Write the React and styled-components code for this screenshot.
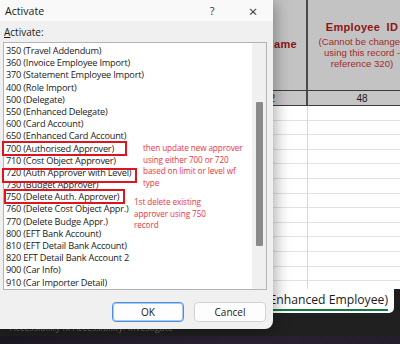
import React from 'react';
import styled, {createGlobalStyle} from 'styled-components';

const GlobalStyle = createGlobalStyle`
  html, body {
    margin: 0;
    padding: 0;
    background: #1f1f1f;
  }
  body {
    font-family: 'Open Sans', 'Noto Sans', sans-serif;
  }
`;

const Screen = styled.div`
  position: relative;
  width: 400px;
  height: 344px;
  overflow: hidden;
  display: flex;
  flex-direction: column;
  background: #1f1f1f;
`;

/* ---------- spreadsheet behind the dialog ---------- */

const Sheet = styled.div`
  flex-shrink: 0;
  width: 416px;
  height: 289px;
  overflow: hidden;
  display: grid;
  grid-template-columns: 308px 108px;
  grid-template-rows: 91px 15px;
  grid-auto-rows: 14.6px;
  background: #ffffff;
  font-family: 'Liberation Sans', Arial, sans-serif;
`;

const HeadCell = styled.div`
  display: flex;
  flex-direction: column;
  justify-content: center;
  align-items: ${p => (p.$end ? 'flex-end' : 'center')};
  padding-right: ${p => (p.$end ? '9px' : '0')};
  background: #c3c3c3;
  border-bottom: 1px solid #3c3c3c;
  border-right: ${p => (p.$end ? '2px solid #4a4a4a' : 'none')};
  color: #8e1414;
`;

const HeadTitle = styled.div`
  font-weight: bold;
  font-size: 11px;
  letter-spacing: 0.3px;
  word-spacing: 3px;
  margin-bottom: 3px;
`;

const HeadNote = styled.div`
  font-size: 9.6px;
  line-height: 11px;
  color: #a22a2a;
  white-space: nowrap;
`;

const ValueCell = styled.div`
  display: flex;
  align-items: center;
  justify-content: ${p => (p.$end ? 'flex-end' : 'center')};
  padding-right: ${p => (p.$end ? '31px' : '0')};
  background: #c6c6c6;
  border-bottom: 1px solid #3c3c3c;
  border-right: ${p => (p.$end ? '2px solid #4a4a4a' : 'none')};
  font-size: 10px;
  color: #1a1a1a;
`;

const EmptyCell = styled.div`
  border-bottom: 1px solid #e2e2e2;
  border-right: ${p => (p.$end ? '1px solid #d8d8d8' : 'none')};
`;

const TabBar = styled.div`
  flex-shrink: 0;
  height: 24px;
  display: flex;
  background: #1f1f1f;
`;

const ActiveTab = styled.div`
  width: 394px;
  display: flex;
  justify-content: flex-end;
  padding: 3px 6px 0 0;
  box-sizing: border-box;
  background: #ffffff;
  border-radius: 0 0 5px 0;
`;

const TabLabel = styled.span`
  font-family: 'Open Sans', sans-serif;
  font-size: 12.2px;
  line-height: 16px;
  height: 17px;
  color: #1b1b1b;
  white-space: nowrap;
  border-bottom: 2px solid #107c41;
`;

const StatusStrip = styled.div`
  flex-shrink: 0;
  height: 23px;
  display: flex;
  align-items: flex-end;
  padding: 0 0 2px 10px;
  box-sizing: border-box;
  background: #202020;
  color: #6a6a6a;
  font-size: 9px;
  filter: blur(0.6px);
`;

const Taskbar = styled.div`
  flex: 1;
  background: linear-gradient(90deg, #1c1822, #2b2233 60%, #241d2b);
`;

/* ---------- dialog ---------- */

const Dialog = styled.div`
  position: absolute;
  top: 0;
  left: 0;
  width: 273px;
  height: 329px;
  display: flex;
  flex-direction: column;
  background: #f0f0f0;
  border-radius: 0 0 8px 0;
  box-shadow: 2px 2px 16px rgba(0, 0, 0, 0.35);
  color: #1a1a1a;
`;

const TitleBar = styled.div`
  height: 21px;
  display: flex;
  align-items: center;
  padding-left: 5px;
  background: #f9f9f9;
`;

const Title = styled.span`
  flex: 1;
  font-size: 10.6px;
`;

const TitleButton = styled.span`
  width: ${p => p.$w}px;
  text-align: center;
  font-size: ${p => p.$size}px;
  color: #333;
`;

const Body = styled.div`
  display: flex;
  flex-direction: column;
  padding: 0 6px 0 3px;
`;

const FieldLabel = styled.div`
  height: 21px;
  display: flex;
  align-items: center;
  padding-left: 1px;
  font-size: 10px;
  u {
    text-decoration-thickness: 1px;
    text-underline-offset: 1px;
  }
`;

const ListBox = styled.div`
  position: relative;
  height: 248px;
  display: flex;
  background: #ffffff;
  border: 1px solid #b3b3b3;
  box-sizing: border-box;
`;

const Items = styled.ul`
  flex: 1;
  list-style: none;
  margin: 0;
  padding: 2px 0 0 2px;
`;

const Item = styled.li`
  height: 12.2px;
  line-height: 12.2px;
  font-size: 9.2px;
  letter-spacing: -0.2px;
  white-space: nowrap;
  color: #1a1a1a;
`;

const ScrollTrack = styled.div`
  width: 14px;
  display: flex;
  justify-content: center;
  padding-top: 59px;
  background: #f0f0f0;
`;

const ScrollThumb = styled.div`
  width: 7px;
  height: 144px;
  border-radius: 1px;
  background: #8a8a8a;
`;

const Mark = styled.div`
  position: absolute;
  left: ${p => p.$x}px;
  top: ${p => p.$y}px;
  width: ${p => p.$w}px;
  height: 15px;
  border: 2px solid #e0141e;
  box-sizing: border-box;
`;

const Note = styled.div`
  position: absolute;
  left: ${p => p.$x}px;
  top: ${p => p.$y}px;
  font-size: 8.2px;
  letter-spacing: -0.1px;
  line-height: 11.6px;
  color: #ee3440;
  white-space: nowrap;
`;

const ButtonRow = styled.div`
  display: flex;
  justify-content: flex-end;
  gap: 10px;
  margin-top: 12px;
  padding-right: 1px;
`;

const Button = styled.button`
  width: 72px;
  height: 20px;
  padding: 0;
  font-family: 'Open Sans', sans-serif;
  font-size: 10px;
  color: #1a1a1a;
  background: #fdfdfd;
  border: 1px solid ${p => (p.$primary ? '#4c8fdc' : '#d3d3d3')};
  box-shadow: ${p => (p.$primary ? 'inset 0 0 0 1px #a9c9ef' : 'none')};
  border-radius: 4px;
`;

const items = [
  '350 (Travel Addendum)',
  '360 (Invoice Employee Import)',
  '370 (Statement Employee Import)',
  '400 (Role Import)',
  '500 (Delegate)',
  '550 (Enhanced Delegate)',
  '600 (Card Account)',
  '650 (Enhanced Card Account)',
  '700 (Authorised Approver)',
  '710 (Cost Object Approver)',
  '720 (Auth Approver with Level)',
  '730 (Budget Approver)',
  '750 (Delete Auth. Approver)',
  '760 (Delete Cost Object Appr.)',
  '770 (Delete Budge Appr.)',
  '800 (EFT Bank Account)',
  '810 (EFT Detail Bank Account)',
  '820 EFT Detail Bank Account 2',
  '900 (Car Info)',
  '910 (Car Importer Detail)',
];

const blankRows = Array.from({length: 13});

export default function App() {
  return (
    <Screen>
      <GlobalStyle />
      <Sheet>
        <HeadCell $end>
          <HeadTitle>Name</HeadTitle>
        </HeadCell>
        <HeadCell>
          <HeadTitle>Employee  ID</HeadTitle>
          <HeadNote>(Cannot be changed</HeadNote>
          <HeadNote>using this record -</HeadNote>
          <HeadNote>reference 320)</HeadNote>
        </HeadCell>
        <ValueCell $end>2</ValueCell>
        <ValueCell>48</ValueCell>
        {blankRows.map((_, i) => (
          <React.Fragment key={i}>
            <EmptyCell $end />
            <EmptyCell />
          </React.Fragment>
        ))}
      </Sheet>
      <TabBar>
        <ActiveTab>
          <TabLabel>320 (Enhanced Employee)</TabLabel>
        </ActiveTab>
      </TabBar>
      <StatusStrip>Accessibility   fx   Accessibility: Investigate</StatusStrip>
      <Taskbar />

      <Dialog>
        <TitleBar>
          <Title>Activate</Title>
          <TitleButton $w={42} $size={11}>?</TitleButton>
          <TitleButton $w={40} $size={15}>×</TitleButton>
        </TitleBar>
        <Body>
          <FieldLabel>
            <span><u>A</u>ctivate:</span>
          </FieldLabel>
          <ListBox>
            <Items>
              {items.map(text => (
                <Item key={text}>{text}</Item>
              ))}
            </Items>
            <ScrollTrack>
              <ScrollThumb />
            </ScrollTrack>
            <Mark $x={-2} $y={98} $w={125} />
            <Mark $x={-2} $y={125} $w={135} />
            <Mark $x={0} $y={146} $w={121} />
            <Note $x={139} $y={99}>
              then update new approver<br />
              using either 700 or 720<br />
              based on limit or level wf<br />
              type
            </Note>
            <Note $x={130} $y={153}>
              1st delete existing<br />
              approver using 750<br />
              record
            </Note>
          </ListBox>
          <ButtonRow>
            <Button $primary>OK</Button>
            <Button>Cancel</Button>
          </ButtonRow>
        </Body>
      </Dialog>
    </Screen>
  );
}
